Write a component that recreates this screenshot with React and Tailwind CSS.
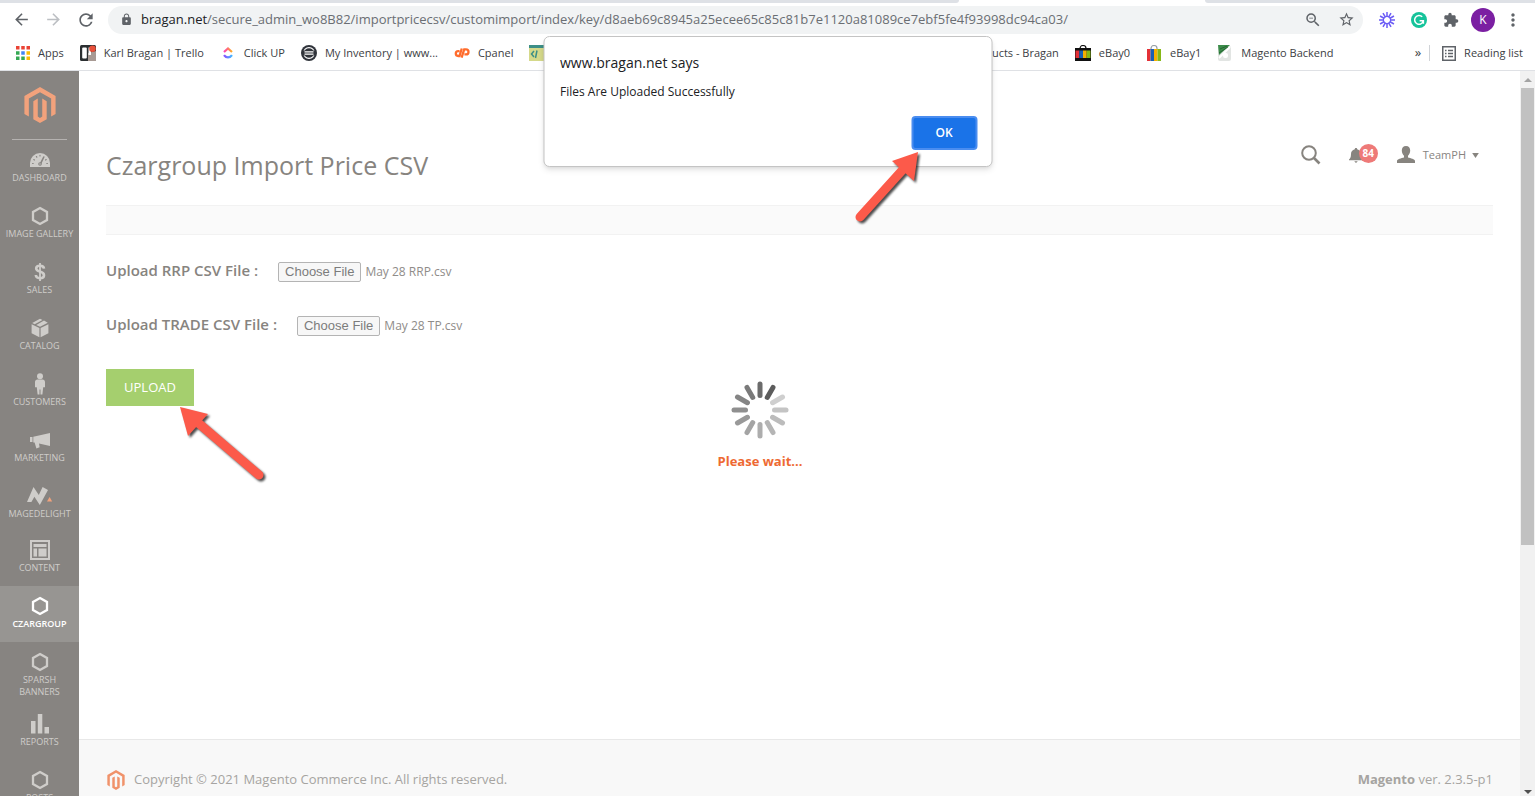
import { useEffect, useRef } from "react";
import {
  MdArrowBack,
  MdArrowForward,
  MdRefresh,
  MdLock,
  MdZoomOut,
  MdStarBorder,
  MdExtension,
  MdMoreVert,
} from "react-icons/md";

/* ---------- icons ---------- */

function MagentoLogo({ className }) {
  return (
    <svg viewBox="0 0 24 24" className={className} fill="currentColor" aria-hidden="true">
      <path d="M12 24l-4.455-2.572v-12l2.97-1.715v12.001l1.485.902 1.485-.902V7.713l2.971 1.715v12L12 24zM22.391 6v12l-2.969 1.714V7.713L12 3.43 4.574 7.713v12.001L1.609 18V6L12 0l10.391 6z" />
    </svg>
  );
}

function DashboardIcon() {
  return (
    <svg width="20" height="20" viewBox="0 0 20 20" aria-hidden="true">
      <path d="M0 17V13a10 10 0 0 1 20 0v4z" fill="currentColor" />
      <g stroke="#878481" strokeWidth="1.2" strokeLinecap="round">
        <path d="M2.6 13.5h.6M3.8 9.6l.6.4M6.4 6.6l.4.6M10 5.4v.6M16.2 9.6l-.6.4M17.4 13.5h-.6" />
        <path d="M13.8 7l-3.6 7.4" strokeWidth="1.6" />
      </g>
      <circle cx="10" cy="14" r="1.8" fill="#878481" />
      <circle cx="10" cy="14" r="0.7" fill="currentColor" />
    </svg>
  );
}

function HexIcon() {
  return (
    <svg width="18" height="20" viewBox="0 0 18 20" fill="none" stroke="currentColor" strokeWidth="2.3" aria-hidden="true">
      <path d="M9 2l7 4v8l-7 4-7-4V6z" />
    </svg>
  );
}

function DollarIcon() {
  return (
    <svg width="12" height="20" viewBox="0 0 12 20" fill="none" stroke="currentColor" aria-hidden="true">
      <path d="M10 6.600C9.800 4.600 8.300 3.800 6 3.800S2.200 4.700 2.200 6.500C2.200 10.400 10 8.700 10 13.200c0 2-1.700 3-4 3s-4-.9-4.200-3.200" strokeWidth="2.600" />
      <path d="M6 1v18" strokeWidth="1.800" />
    </svg>
  );
}

function BoxIcon() {
  return (
    <svg width="18" height="20" viewBox="0 0 18 20" fill="currentColor" aria-hidden="true">
      <path d="M.6 6.200l7.800 3.700v9.300L.6 15.200zM17.400 6.200L9.600 9.900v9.300l7.800-4z" />
      <path d="M9 .8l2.500 1.100L3.700 6.200 1.200 5zM13 2.600l3.800 2.200L9 8.800 5.300 7z" />
    </svg>
  );
}

function PersonIcon() {
  return (
    <svg width="12" height="22" viewBox="0 0 12 22" fill="currentColor" aria-hidden="true">
      <circle cx="6" cy="3.200" r="3" />
      <path d="M3.400 6.600h5.200c1.400 0 2.400 1 2.400 2.400v5.200H9.200l-.8 7.400H6.500v-5h-1v5H3.600l-.8-7.400H1V9c0-1.400 1-2.400 2.400-2.400z" />
    </svg>
  );
}

function MegaphoneIcon() {
  return (
    <svg width="20" height="18" viewBox="0 0 20 18" fill="currentColor" aria-hidden="true">
      <path d="M0 6h2.500v5H0zM3.300 5.800L20 2v13L9 12.400l.6 3.800-3.200 1.200-1.800-6H3.300z" />
    </svg>
  );
}

function MagedelightIcon() {
  return (
    <svg width="26" height="18" viewBox="0 0 26 18" aria-hidden="true">
      <path d="M0 15L6.500 0l5.300 8L15.600 0 21 3l-8.200 15-5.400-8.200L4.400 15z" fill="currentColor" />
      <path d="M20 14.500l2.600-4.500 2.600 4.500z" fill="#f2a27c" />
    </svg>
  );
}

function ContentIcon() {
  return (
    <svg width="20" height="20" viewBox="0 0 20 20" aria-hidden="true">
      <rect x="1" y="1" width="18" height="18" fill="none" stroke="currentColor" strokeWidth="2" />
      <path d="M3.500 4h13v3h-13zM3.500 8.500h3.500v8H3.500zM8.500 8.500h8v8h-8z" fill="currentColor" />
    </svg>
  );
}

function ReportsIcon() {
  return (
    <svg width="18" height="20" viewBox="0 0 18 20" fill="currentColor" aria-hidden="true">
      <path d="M0 7h4.500v12.500H0zM6.800 0h4.500v19.500H6.800zM13.500 13H18v6.500h-4.500z" />
    </svg>
  );
}

function TrelloIcon() {
  return (
    <svg width="16" height="16" viewBox="0 0 16 16" aria-hidden="true">
      <rect width="16" height="16" rx="1.500" fill="#2b2f31" />
      <path d="M8 8l8-2v10H8z" fill="#a89a94" />
      <rect x="2.200" y="2.500" width="4.600" height="11" rx="1" fill="#fff" />
      <rect x="8.500" y="2.500" width="2.500" height="7.500" fill="#fff" />
      <circle cx="12.500" cy="3.800" r="3.300" fill="#e8503a" />
    </svg>
  );
}

function ClickUpIcon() {
  return (
    <svg width="16" height="16" viewBox="0 0 16 16" fill="none" strokeWidth="2.200" aria-hidden="true">
      <defs>
        <linearGradient id="cu-top">
          <stop offset="0" stopColor="#ff3db8" />
          <stop offset="1" stopColor="#ffb021" />
        </linearGradient>
        <linearGradient id="cu-bottom">
          <stop offset="0" stopColor="#8a4dff" />
          <stop offset="1" stopColor="#43b9ff" />
        </linearGradient>
      </defs>
      <path d="M4 7l4-3.600L12 7" stroke="url(#cu-top)" />
      <path d="M4 10.200c2 3 6 3 8 0" stroke="url(#cu-bottom)" />
    </svg>
  );
}

function InventoryIcon() {
  return (
    <svg width="16" height="16" viewBox="0 0 16 16" aria-hidden="true">
      <circle cx="8" cy="8" r="8" fill="#30343b" />
      <circle cx="8" cy="8" r="5.400" fill="none" stroke="#fff" strokeWidth="1.100" />
      <path d="M1.500 8h13" stroke="#30343b" strokeWidth="5" />
      <path d="M3.500 6.800h9M3.500 9.200h9" stroke="#fff" strokeWidth="1.200" />
    </svg>
  );
}

function CpanelIcon() {
  return (
    <svg width="16" height="16" viewBox="0 0 16 16" fill="none" stroke="#ff6c2c" strokeWidth="2.300" aria-hidden="true">
      <path d="M5.500 6.200H4.200a2.400 2.400 0 0 0 0 4.800h1.300L7.800 3.500" />
      <path d="M7.600 12.600l2.600-8.200h1.800a2.500 2.500 0 0 1 0 5h-1.600" />
    </svg>
  );
}

function CodeIcon() {
  return (
    <svg width="16" height="16" viewBox="0 0 16 16" aria-hidden="true">
      <rect width="16" height="16" fill="#d5d98a" />
      <rect width="16" height="3" fill="#3d8f87" />
      <path d="M5 6L2.500 9 5 12M8 5.500L6.500 13" fill="none" stroke="#3d8f87" strokeWidth="1.500" />
    </svg>
  );
}

function EbayIcon({ dark }) {
  return (
    <svg width="16" height="16" viewBox="0 0 16 16" aria-hidden="true">
      <path d="M5 5V3.500a3 3 0 0 1 6 0V5" fill="none" stroke={dark ? "#111" : "#9aa0a6"} strokeWidth="1.200" />
      {dark && <rect y="3" width="16" height="13" fill="#111" />}
      <path d={dark ? "M0.500 5.500h3.800v7.500H.500z" : "M1 4h3.500v12H1z"} fill="#e43137" />
      <path d={dark ? "M4.300 5.500H8v7.500H4.300z" : "M4.500 4H8v12H4.500z"} fill="#1a5fb4" />
      <path d={dark ? "M8 5.500h3.700v7.500H8z" : "M8 4h3.500v12H8z"} fill="#f5af02" />
      <path d={dark ? "M11.700 5.500h3.800v7.500h-3.800z" : "M11.500 4H15v12h-3.500z"} fill="#86b817" />
    </svg>
  );
}

function BackendIcon() {
  return (
    <svg width="16" height="16" viewBox="0 0 16 16" aria-hidden="true">
      <rect x="1" y="1" width="13" height="15" rx="2" fill="#e2e5e3" />
      <path d="M1 0h12L2 10z" fill="#3c8c4a" />
      <path d="M3 4l7-3M2 8l9-6" stroke="#1f5c2c" strokeWidth="0.800" />
      <path d="M2 13L13 2" stroke="#fff" strokeWidth="1.800" />
      <rect x="6" y="8" width="5" height="5" rx="2" fill="#fff" />
    </svg>
  );
}

function BurstIcon() {
  return (
    <svg width="16" height="16" viewBox="0 0 16 16" stroke="#6b5cf5" strokeWidth="1.500" aria-hidden="true">
      {[0, 30, 60, 90, 120, 150, 180, 210, 240, 270, 300, 330].map((deg) => (
        <path key={deg} d="M8 0v5" transform={`rotate(${deg} 8 8)`} />
      ))}
      <circle cx="8" cy="8" r="3.600" fill="none" strokeWidth="1.200" />
    </svg>
  );
}

function GrammarlyIcon() {
  return (
    <svg width="16" height="16" viewBox="0 0 16 16" aria-hidden="true">
      <circle cx="8" cy="8" r="8" fill="#15c39a" />
      <path d="M11.200 4.800A4.400 4.400 0 1 0 12.300 9M8.600 8.800h3.800v3" fill="none" stroke="#fff" strokeWidth="1.500" />
    </svg>
  );
}

function ReadingListIcon() {
  return (
    <svg width="14" height="15" viewBox="0 0 14 15" fill="none" stroke="#5f6368" strokeWidth="1.500" aria-hidden="true">
      <rect x="0.750" y="0.750" width="12.500" height="13.500" />
      <path d="M3 4.500h1.500M3 7.500h1.500M3 10.500h1.500M6 4.500h5M6 7.500h5M6 10.500h5" />
    </svg>
  );
}

function Spinner() {
  const shades = ["#6b6b6b", "#5c5c5c", "#cfcfcf", "#c4c4c4", "#bcbcbc", "#b5b5b5", "#adadad", "#a4a4a4", "#999999", "#8f8f8f", "#858585", "#7a7a7a"];
  return (
    <svg width="58" height="58" viewBox="0 0 58 58" strokeWidth="5" strokeLinecap="round" aria-hidden="true">
      {shades.map((shade, i) => (
        <path key={i} d="M29 3v11.500" stroke={shade} transform={`rotate(${i * 30} 29 29)`} />
      ))}
    </svg>
  );
}

/* ---------- browser ---------- */

function Toolbar() {
  return (
    <div className="flex h-[33px] items-center px-3 text-[#5f6368]">
      <button aria-label="Back" className="w-5">
        <MdArrowBack size={19} />
      </button>
      <button aria-label="Forward" className="ml-3 w-5 text-[#bcbfc3]">
        <MdArrowForward size={19} />
      </button>
      <button aria-label="Reload" className="ml-3 w-5">
        <MdRefresh size={20} />
      </button>
      <div className="ml-3 flex h-7 min-w-0 flex-1 items-center rounded-full bg-[#f1f3f4] pl-3 pr-2">
        <MdLock size={13} className="shrink-0" />
        <p className="ml-2 flex-1 truncate text-[13px] text-[#6a6e73]">
          <span className="text-[#202124]">bragan.net</span>
          /secure_admin_wo8B82/importpricecsv/customimport/index/key/d8aeb69c8945a25ecee65c85c81b7e1120a81089ce7ebf5fe4f93998dc94ca03/
        </p>
        <button aria-label="Zoom out">
          <MdZoomOut size={18} />
        </button>
        <button aria-label="Bookmark this page" className="ml-4">
          <MdStarBorder size={17} />
        </button>
      </div>
      <div className="ml-4 flex items-center gap-4">
        <BurstIcon />
        <GrammarlyIcon />
        <MdExtension size={16} />
      </div>
      <span className="ml-3 flex size-6 items-center justify-center rounded-full bg-[#7b1fa2] text-[12px] text-white">K</span>
      <button aria-label="Menu" className="ml-2">
        <MdMoreVert size={20} />
      </button>
    </div>
  );
}

function Bookmark({ icon, children, className = "" }) {
  return (
    <a href="#" className={`flex shrink-0 items-center gap-2 whitespace-nowrap ${className}`}>
      {icon}
      {children}
    </a>
  );
}

function BookmarksBar() {
  return (
    <nav aria-label="Bookmarks" className="flex h-[35px] items-center border-b border-[#dfe1e5] pl-4 pr-3 text-[11px] text-[#3c4043]">
      <Bookmark
        icon={
          <svg width="14" height="14" viewBox="0 0 14 14" aria-hidden="true">
            <path d="M0 0h3.500v3.500H0zM5.250 0h3.500v3.500h-3.500zM10.500 0H14v3.500h-3.500z" fill="#ea4335" />
            <path d="M0 5.250h3.500v3.500H0zM0 10.500h3.500V14H0zM5.250 10.500h3.500V14h-3.500z" fill="#34a853" />
            <path d="M5.250 5.250h3.500v3.500h-3.500z" fill="#4285f4" />
            <path d="M10.500 5.250H14v3.500h-3.500zM10.500 10.500H14V14h-3.500z" fill="#fbbc05" />
          </svg>
        }
      >
        Apps
      </Bookmark>
      <Bookmark icon={<TrelloIcon />} className="ml-4">Karl Bragan | Trello</Bookmark>
      <Bookmark icon={<ClickUpIcon />} className="ml-4">Click UP</Bookmark>
      <Bookmark icon={<InventoryIcon />} className="ml-4">My Inventory | www...</Bookmark>
      <Bookmark icon={<CpanelIcon />} className="ml-4">Cpanel</Bookmark>
      <Bookmark icon={<CodeIcon />} className="ml-4 w-[438px]" />
      <Bookmark>Products - Bragan</Bookmark>
      <Bookmark icon={<EbayIcon dark />} className="ml-4">eBay0</Bookmark>
      <Bookmark icon={<EbayIcon />} className="ml-4">eBay1</Bookmark>
      <Bookmark icon={<BackendIcon />} className="ml-4">Magento Backend</Bookmark>
      <button aria-label="More bookmarks" className="ml-auto text-[13px]">»</button>
      <div className="ml-2 h-4 w-px bg-[#d0d3d7]"></div>
      <Bookmark icon={<ReadingListIcon />} className="ml-3">Reading list</Bookmark>
    </nav>
  );
}

/* ---------- admin ---------- */

const menu = [
  { label: "Dashboard", icon: <DashboardIcon />, height: "h-14" },
  { label: "Image Gallery", icon: <HexIcon />, height: "h-14" },
  { label: "Sales", icon: <DollarIcon />, height: "h-14" },
  { label: "Catalog", icon: <BoxIcon />, height: "h-14" },
  { label: "Customers", icon: <PersonIcon />, height: "h-14" },
  { label: "Marketing", icon: <MegaphoneIcon />, height: "h-14" },
  { label: "Magedelight", icon: <MagedelightIcon />, height: "h-[54px]" },
  { label: "Content", icon: <ContentIcon />, height: "h-14" },
  { label: "Czargroup", icon: <HexIcon />, height: "h-14", active: true },
  { label: "Sparsh Banners", icon: <HexIcon />, height: "h-[62px]", wrap: true },
  { label: "Reports", icon: <ReportsIcon />, height: "h-14" },
  { label: "Posts", icon: <HexIcon />, height: "h-14" },
];

function Sidebar() {
  return (
    <aside className="flex w-[79px] shrink-0 flex-col overflow-hidden bg-[#878481]">
      <a href="#" aria-label="Magento home" className="mx-3 flex h-[69px] shrink-0 justify-center border-b border-[#b5b2b0] pt-4 text-[#f2a27c]">
        <MagentoLogo className="size-9" />
      </a>
      <nav aria-label="Admin menu">
        {menu.map((item) => (
          <a
            key={item.label}
            href="#"
            className={`flex flex-col items-center pt-2 text-center text-[9px] leading-3 uppercase ${item.height} ${
              item.active ? "bg-[#979592] font-semibold text-white" : "text-[#cfcdca]"
            }`}
          >
            <span className="flex h-6 items-center">{item.icon}</span>
            <span className={item.wrap ? "w-14" : "whitespace-nowrap"}>{item.label}</span>
          </a>
        ))}
      </nav>
    </aside>
  );
}

function FileField({ id, label, fileName }) {
  const ref = useRef(null);

  useEffect(() => {
    const transfer = new DataTransfer();
    transfer.items.add(new File([""], fileName, { type: "text/csv" }));
    ref.current.files = transfer.files;
  }, [fileName]);

  return (
    <div className="flex h-[54px] items-center">
      <label htmlFor={id} className="pb-1 text-[15px] font-semibold">{label}</label>
      <input
        ref={ref}
        id={id}
        type="file"
        accept=".csv"
        className="ml-5 w-64 text-[12px] text-[#8f8c89] file:mr-1 file:h-5 file:rounded-xs file:border file:border-solid file:border-[#b4b4b4] file:bg-[#f7f7f7] file:px-[6px] file:font-['Liberation_Sans'] file:text-[13px] file:leading-4 file:text-[#7c7c7c]"
      />
    </div>
  );
}

function PageHeader() {
  return (
    <header className="flex h-[134px] items-end justify-between pb-5">
      <h1 className="text-[25px] leading-10">Czargroup Import Price CSV</h1>
      <div className="flex h-16 items-center pr-[14px] pt-1">
        <button aria-label="Search">
          <svg width="20" height="20" viewBox="0 0 20 20" fill="none" stroke="currentColor" strokeWidth="2" aria-hidden="true">
            <circle cx="8" cy="8" r="6.800" />
            <path d="M13 13l5.500 5.500" strokeWidth="2.600" />
          </svg>
        </button>
        <button aria-label="Notifications" className="relative ml-7 flex h-6 w-8 items-center">
          <svg width="14" height="16" viewBox="0 0 14 16" fill="currentColor" aria-hidden="true">
            <path d="M7 1c.8 0 1.200.5 1.200 1.200C10.600 2.800 12 4.600 12 7c0 3.500 1 4.500 2 5.500v.8H0v-.8c1-1 2-2 2-5.500 0-2.400 1.400-4.200 3.800-4.800C5.800 1.500 6.200 1 7 1zM5.200 14.200h3.600L7 16z" />
          </svg>
          <span className="absolute top-px right-[3px] flex size-[19px] items-center justify-center rounded-full bg-[#ee7a78] text-[10px] font-bold text-white">84</span>
        </button>
        <button className="ml-4 flex items-center text-[11px]">
          <svg width="18" height="18" viewBox="0 0 18 18" fill="currentColor" aria-hidden="true">
            <path d="M9 0c2.800 0 4.200 2 4.200 4.500 0 2.200-1 4.200-2.200 5.300v1.700c2.500.8 7 1.500 7 3.500v2H0v-2c0-2 4.500-2.700 7-3.500V9.800C5.800 8.700 4.800 6.700 4.800 4.500 4.800 2 6.200 0 9 0z" />
          </svg>
          <span className="ml-2">TeamPH</span>
          <svg width="7" height="5" viewBox="0 0 8 6" fill="currentColor" className="ml-1.5" aria-hidden="true">
            <path d="M0 0h8L4 6z" />
          </svg>
        </button>
      </div>
    </header>
  );
}

function AlertDialog() {
  return (
    <div
      role="alertdialog"
      aria-labelledby="alert-title"
      aria-describedby="alert-text"
      className="absolute top-9 left-1/2 flex w-[449px] -translate-x-1/2 flex-col rounded-md border border-[#c4c4c4] bg-white px-4 pt-[14px] pb-4 text-[#202124] shadow-md"
    >
      <h2 id="alert-title" className="text-[14px] leading-6">www.bragan.net says</h2>
      <p id="alert-text" className="mt-[5px] text-[12px] leading-6">Files Are Uploaded Successfully</p>
      <button className="-mr-0.5 mt-3 h-[34px] w-[66px] self-end rounded-sm border-2 border-[#4a8df0] bg-[#1a73e8] text-[12px] font-semibold text-white">OK</button>
    </div>
  );
}

function Arrow({ className, path, head }) {
  return (
    <svg width="100" height="84" viewBox="0 0 100 84" className={`pointer-events-none absolute drop-shadow-[2px_2px_1px_rgba(0,0,0,0.7)] ${className}`} aria-hidden="true">
      <path d={path} stroke="#fc5a4a" strokeWidth="9" strokeLinecap="round" />
      <path d={head} fill="#fc5a4a" />
    </svg>
  );
}

function App() {
  return (
    <div className="relative flex h-screen flex-col overflow-hidden bg-white font-['Open_Sans',sans-serif]">
      {/* Tab strip */}
      <div className="flex h-[3px] shrink-0 justify-between">
        <div className="w-[62.5%] rounded-br-full bg-[#dee1e6]"></div>
        <div className="w-[21.5%] rounded-bl-full bg-[#dee1e6]"></div>
      </div>
      <Toolbar />
      <BookmarksBar />

      {/* Page */}
      <div className="relative flex min-h-0 flex-1 text-[#87847f]">
        <Sidebar />
        <div className="flex min-w-0 flex-1 flex-col">
          <main className="flex-1 px-[27px]">
            <PageHeader />
            <div className="h-[30px] border-y border-[#f2f2f2] bg-[#fafafa]"></div>
            <form className="pt-[10px]" onSubmit={(e) => e.preventDefault()}>
              <FileField id="rrp" label="Upload RRP CSV File :" fileName="May 28 RRP.csv" />
              <FileField id="trade" label="Upload TRADE CSV File :" fileName="May 28 TP.csv" />
              <button className="mt-4 h-[37px] w-22 bg-[#a5cf6e] text-[13px] text-white">UPLOAD</button>
            </form>
          </main>
          <footer className="flex h-[57px] shrink-0 items-center justify-between border-t border-[#e8e8e8] bg-[#f8f8f8] px-[27px] pt-6 text-[13px] text-[#a6a4a1]">
            <p className="flex items-center gap-2">
              <MagentoLogo className="size-5 text-[#f0926a]" />
              Copyright © 2021 Magento Commerce Inc. All rights reserved.
            </p>
            <p>
              <strong>Magento</strong> ver. 2.3.5-p1
            </p>
          </footer>
        </div>

        {/* Scrollbar */}
        <div className="flex w-[15px] shrink-0 flex-col items-center bg-[#f1f1f1]">
          <svg width="8" height="17" viewBox="0 0 8 17" fill="#a3a3a3" aria-hidden="true">
            <path d="M0 11l4-4 4 4z" />
          </svg>
          <div className="h-[63%] w-[13px] bg-[#c1c1c1]"></div>
          <svg width="8" height="8" viewBox="0 0 8 8" fill="#505050" className="mt-auto" aria-hidden="true">
            <path d="M0 2h8L4 6z" />
          </svg>
        </div>

        {/* Loading mask */}
        <div className="pointer-events-none absolute inset-y-0 left-0 right-[15px] flex flex-col items-center justify-center pb-4">
          <Spinner />
          <p className="mt-3 text-[13px] leading-5 font-bold text-[#ee6a33]">Please wait...</p>
        </div>
      </div>

      <AlertDialog />
      <Arrow className="top-[147px] left-[840px]" path="M20 70L67 18" head="M78 5L74 34 52 14z" />
      <Arrow className="top-[403px] left-[174px]" path="M85 72L22 18" head="M6 4L34 11 14 33z" />
    </div>
  );
}

export default App;
